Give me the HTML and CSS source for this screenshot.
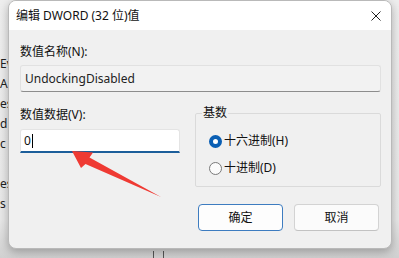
FILE: index.html
```html
<!DOCTYPE html>
<html lang="zh-CN">
<head>
<meta charset="utf-8">
<title>编辑 DWORD (32 位)值</title>
<link rel="stylesheet" href="styles.css">
</head>
<body>
<div class="desktop">
  <div class="bgwin">
    <div class="treepane">
      <div class="bgline"></div>
      <div class="bgline"></div>
      <div class="bgline"></div>
      <div class="bgline">Ev</div>
      <div class="bgline">Au</div>
      <div class="bgline">es</div>
      <div class="bgline">d</div>
      <div class="bgline">c</div>
      <div class="bgline"></div>
      <div class="bgline">es</div>
      <div class="bgline">s</div>
    </div>
    <div class="mainpane">
      <div class="bgfoot"></div>
    </div>
  </div>

  <div class="dialog">
    <div class="titlebar">
      <span class="title">编辑 DWORD (32 位)值</span>
      <svg class="close" width="10" height="10" viewBox="0 0 10 10"><path d="M0.5 0.5 L9.5 9.5 M9.5 0.5 L0.5 9.5" stroke="#222" stroke-width="1" fill="none"/></svg>
    </div>
    <div class="content">
      <div class="label first">数值名称(N):</div>
      <div class="namebox">UndockingDisabled</div>
      <div class="row">
        <div class="leftcol">
          <div class="label">数值数据(V):</div>
          <div class="databox">0<span class="caret"></span></div>
        </div>
        <fieldset class="group">
          <legend>基数</legend>
          <div class="radio-row">
            <span class="radio checked"></span><span>十六进制(H)</span>
          </div>
          <div class="radio-row second">
            <span class="radio"></span><span>十进制(D)</span>
          </div>
        </fieldset>
      </div>
      <div class="buttons">
        <div class="btn primary">确定</div>
        <div class="btn">取消</div>
      </div>
    </div>
  </div>

  <svg class="arrow" width="399" height="258" viewBox="0 0 399 258">
    <polygon points="72,151 93,152.5 89.5,157.5 161,197 85.5,164 81,168" fill="#ef3a33"/>
  </svg>
</div>
</body>
</html>
```

FILE: styles.css
```css
* { box-sizing: border-box; }
html, body {
  margin: 0;
  width: 399px;
  height: 258px;
  overflow: hidden;
}
body {
  font-family: "Noto Sans", "Noto Sans CJK SC", sans-serif;
  font-size: 12px;
  color: #111;
  background: #dcdcdc;
}
.desktop {
  position: relative;
  width: 399px;
  height: 258px;
}
.bgwin {
  display: flex;
  width: 399px;
  height: 258px;
  background: linear-gradient(#eeeeee, #e8e8e8 85%, #d0d0d0);
}
.treepane {
  width: 8px;
  overflow: hidden;
  display: flex;
  flex-direction: column;
  padding-top: 0;
}
.bgline {
  height: 20px;
  line-height: 20px;
  white-space: nowrap;
  color: #222;
  font-size: 12px;
  flex: none;
}
.bgline:first-child {
  margin-top: -6px;
}
.mainpane {
  flex: 1;
  display: flex;
  flex-direction: column;
}
.bgfoot {
  margin-top: auto;
  margin-left: 145px;
  width: 11px;
  height: 7px;
  border-left: 1px solid #555;
  border-right: 1px solid #555;
}
.dialog {
  position: absolute;
  left: 8px;
  top: 0;
  width: 384px;
  height: 249px;
  border: 1px solid #b9b9b9;
  border-radius: 8px;
  background: #f0f0f0;
  box-shadow: 0 3px 10px rgba(0, 0, 0, 0.28);
  overflow: hidden;
  display: flex;
  flex-direction: column;
}
.titlebar {
  height: 29px;
  background: #ffffff;
  display: flex;
  align-items: center;
  padding-left: 7px;
  padding-right: 10px;
}
.title {
  flex: 1;
  line-height: 16px;
  color: #111;
}
.close {
  display: block;
}
.content {
  display: flex;
  flex-direction: column;
  padding: 0 10px 0 11px;
}
.label {
  line-height: 16px;
  height: 16px;
  white-space: nowrap;
}
.label.first {
  margin-top: 14px;
}
.namebox {
  margin-top: 5px;
  height: 27px;
  line-height: 25px;
  padding-left: 4px;
  background: #f2f2f2;
  border: 1px solid #e1e1e1;
  border-bottom-color: #8d8d8d;
  border-radius: 3px;
  color: #222;
}
.row {
  display: flex;
  gap: 15px;
  margin-top: 15px;
}
.leftcol {
  width: 160px;
  display: flex;
  flex-direction: column;
}
.databox {
  margin-top: 6px;
  height: 24px;
  line-height: 21px;
  padding-left: 3px;
  background: #ffffff;
  border: 1px solid #e4e4e4;
  border-bottom: 2px solid #1c5e9a;
  border-radius: 3px 3px 0 0;
  color: #111;
  display: flex;
  align-items: center;
}
.caret {
  display: inline-block;
  width: 1px;
  height: 14px;
  background: #000;
  margin-left: 1px;
}
.group {
  margin: -2px 0 0 0;
  width: 186px;
  padding: 12px 6px 10px 13px;
  border: 1px solid #dadada;
  border-radius: 2px;
  min-width: 0;
}
.group legend {
  padding: 0 1px;
  line-height: 16px;
  height: 16px;
  margin-left: -7px;
}
.radio-row {
  display: flex;
  align-items: center;
  gap: 2px;
  height: 16px;
  line-height: 16px;
  white-space: nowrap;
}
.radio-row.second {
  margin-top: 11px;
}
.radio {
  width: 13px;
  height: 13px;
  border-radius: 50%;
  border: 1px solid #7a7a7a;
  background: #fbfbfb;
  flex: none;
}
.radio.checked {
  border: 4px solid #0a5fb4;
  background: #ffffff;
}
.buttons {
  display: flex;
  justify-content: flex-end;
  gap: 11px;
  margin-top: 17px;
  padding-right: 2px;
}
.btn {
  width: 85px;
  height: 27px;
  line-height: 25px;
  text-align: center;
  border: 1px solid #d3d3d3;
  border-bottom-color: #c2c2c2;
  border-radius: 4px;
  background: #fbfbfb;
  color: #111;
}
.btn.primary {
  border-color: #3d7cc0;
  background: #fdfdfd;
}
.arrow {
  position: absolute;
  left: 0;
  top: 0;
  pointer-events: none;
}
```
